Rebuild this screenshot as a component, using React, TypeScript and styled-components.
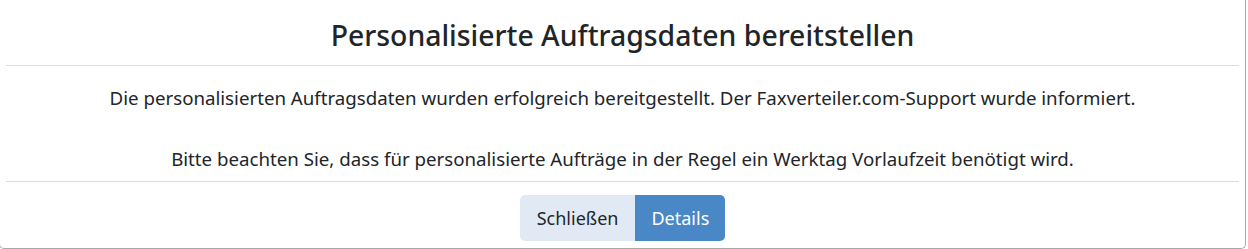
import styled, { createGlobalStyle } from 'styled-components';

const GlobalStyle = createGlobalStyle`
  html, body {
    margin: 0;
    padding: 0;
    background: #ffffff;
  }
  body {
    font-family: "Noto Sans", "Open Sans", sans-serif;
    color: #212529;
  }
`;

const Modal = styled.div`
  box-sizing: border-box;
  width: 1247px;
  height: 249px;
  margin-left: -1px;
  background: #ffffff;
  border: 1px solid #a8a8a8;
  border-top: none;
  border-radius: 0 0 5px 5px;
  display: flex;
  flex-direction: column;
`;

const Header = styled.header`
  height: 65px;
  box-sizing: border-box;
  padding-top: 4px;
  display: flex;
  align-items: center;
  justify-content: center;
`;

const Title = styled.h4`
  margin: 0;
  font-size: 28.4px;
  font-weight: 500;
  color: #212529;
`;

const Divider = styled.hr`
  margin: 0 6px;
  border: none;
  border-top: 1px solid #dcdcdc;
`;

const Body = styled.div`
  height: 115px;
  box-sizing: border-box;
  padding-top: 17px;
  display: flex;
  flex-direction: column;
  gap: 31px;
  align-items: center;
`;

const Text = styled.p`
  margin: 0;
  font-size: 18.7px;
  line-height: 30px;
  color: #212529;
`;

const Footer = styled.footer`
  flex: 1;
  display: flex;
  justify-content: center;
  padding-top: 13px;
`;

const Group = styled.div`
  display: flex;
  height: 46px;
`;

const Button = styled.button<{ $primary?: boolean }>`
  font-family: "Noto Sans", "Open Sans", sans-serif;
  font-size: 18px;
  border: none;
  padding: 0 ${(p) => (p.$primary ? 16 : 17)}px;
  background: ${(p) => (p.$primary ? '#4a87c6' : '#e1eaf4')};
  color: ${(p) => (p.$primary ? '#ffffff' : '#212529')};
  border-radius: ${(p) => (p.$primary ? '0 5px 5px 0' : '5px 0 0 5px')};
  cursor: pointer;
`;

export default function App() {
  return (
    <>
      <GlobalStyle />
      <Modal>
        <Header>
          <Title>Personalisierte Auftragsdaten bereitstellen</Title>
        </Header>
        <Divider />
        <Body>
          <Text>
            Die personalisierten Auftragsdaten wurden erfolgreich bereitgestellt. Der Faxverteiler.com-Support wurde informiert.
          </Text>
          <Text>
            Bitte beachten Sie, dass für personalisierte Aufträge in der Regel ein Werktag Vorlaufzeit benötigt wird.
          </Text>
        </Body>
        <Divider />
        <Footer>
          <Group>
            <Button>Schließen</Button>
            <Button $primary>Details</Button>
          </Group>
        </Footer>
      </Modal>
    </>
  );
}
